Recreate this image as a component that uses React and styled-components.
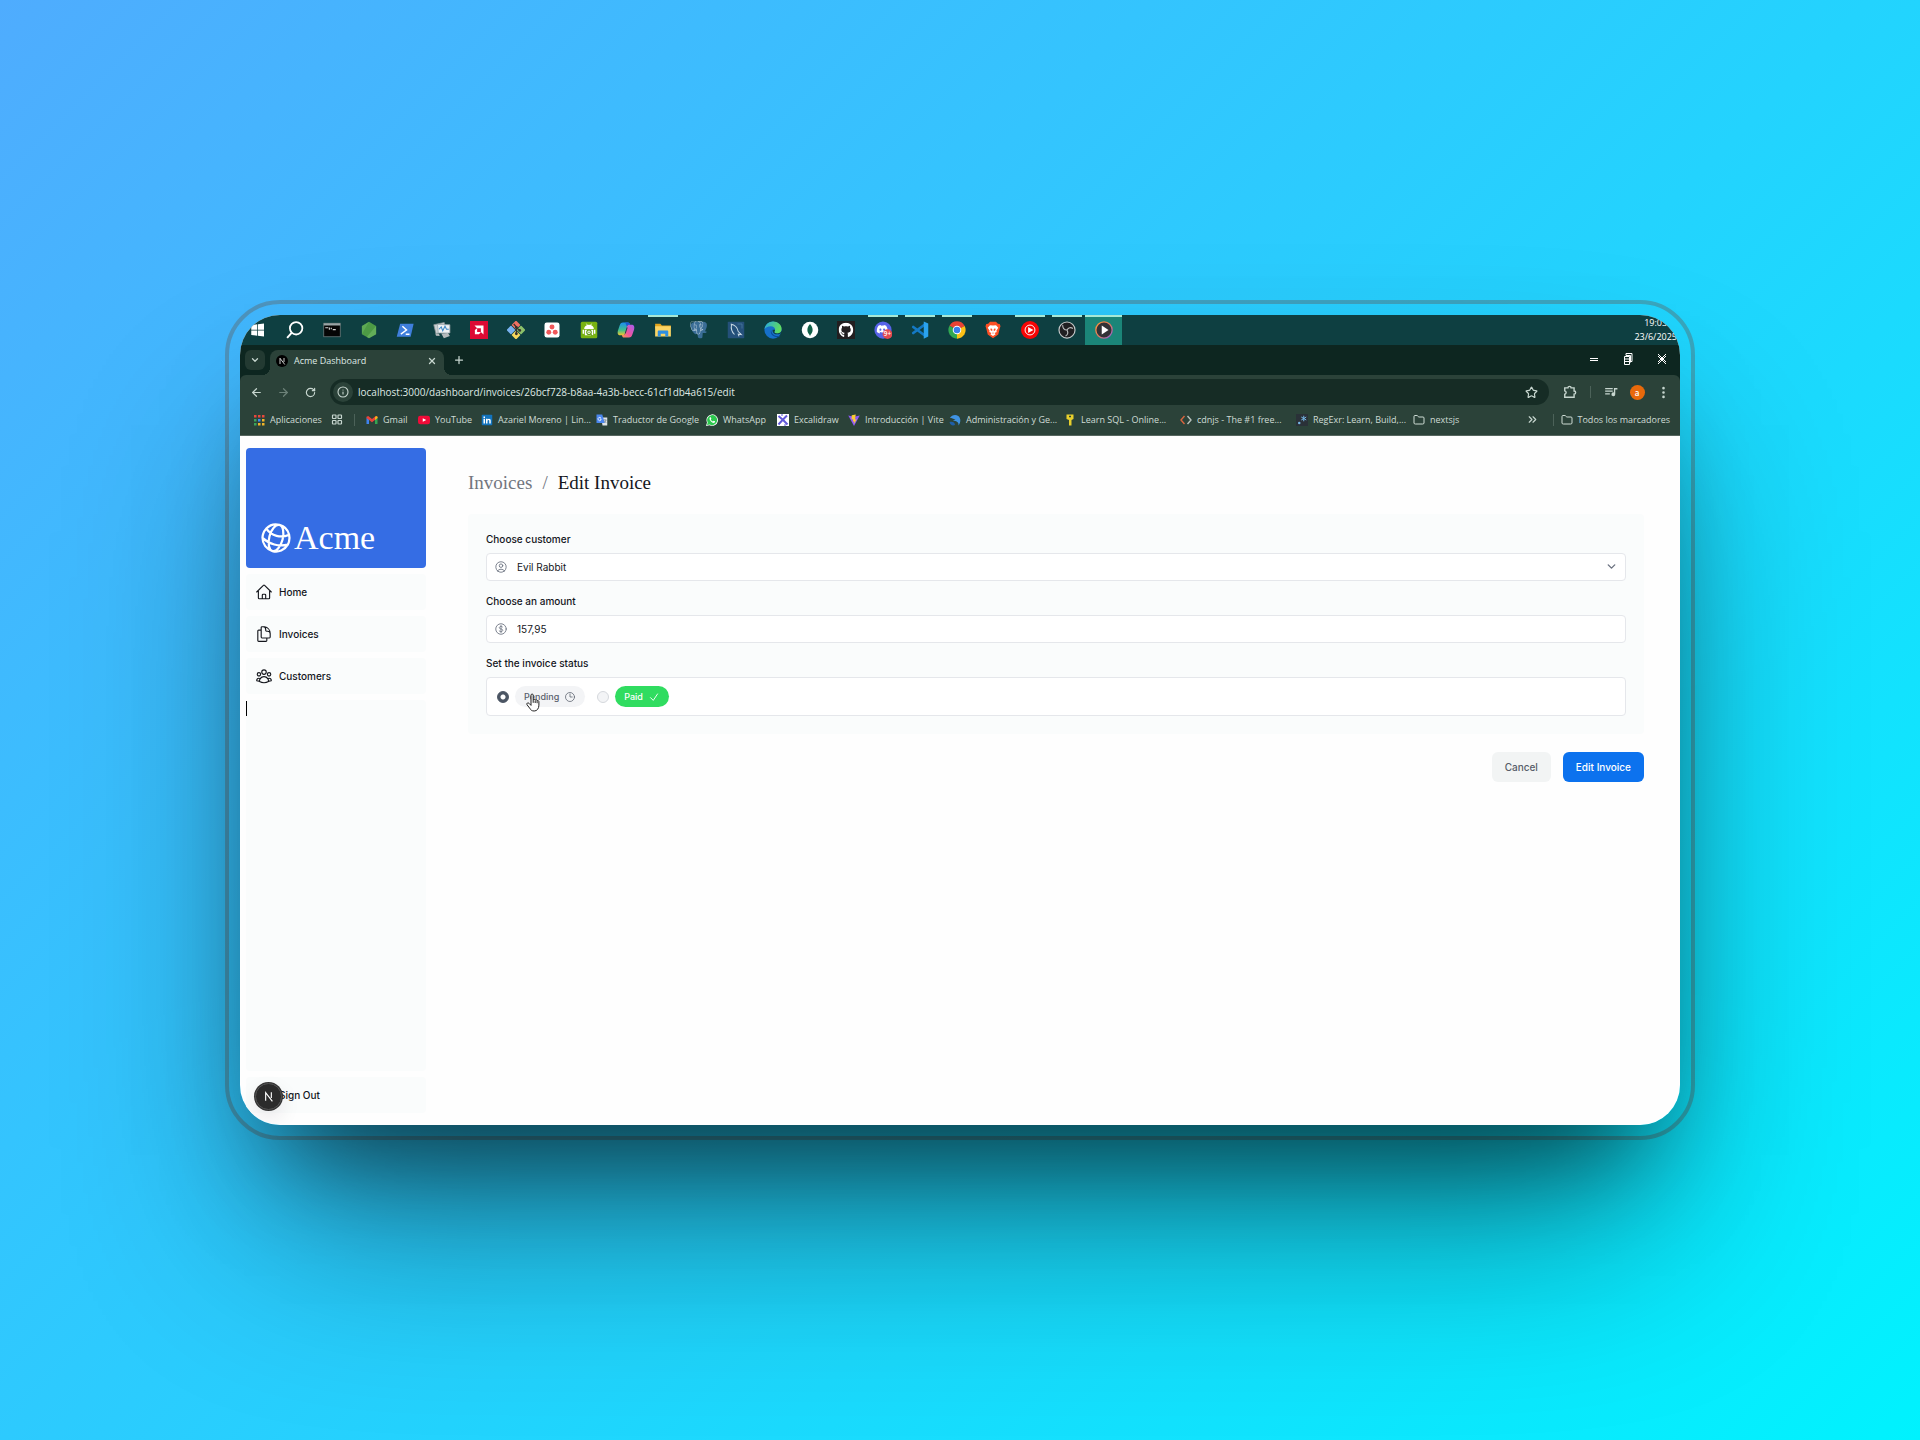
import React, { useState } from "react";
import styled, { createGlobalStyle, css } from "styled-components";
import {
  HiOutlineGlobeAlt,
  HiOutlineHome,
  HiOutlineDocumentDuplicate,
  HiOutlineUserGroup,
  HiOutlineUserCircle,
  HiOutlineCurrencyDollar,
  HiOutlineClock,
  HiOutlinePower,
} from "react-icons/hi2";
import { FaGithub, FaDiscord, FaWhatsapp } from "react-icons/fa";
import { SiPostgresql } from "react-icons/si";
import {
  ArrowLeft,
  ArrowRight,
  RotateCw,
  Info,
  Star,
  EllipsisVertical,
  ChevronDown,
  X,
  Plus,
  Folder,
  ChevronsRight,
  LayoutGrid,
} from "lucide-react";

const GlobalStyle = createGlobalStyle`
  *, *::before, *::after { box-sizing: border-box; }
  body { margin: 0; }
  button, input, select { font: inherit; color: inherit; margin: 0; }
  a { color: inherit; text-decoration: none; }
`;

const chromeFont = '"Open Sans", "Noto Sans", sans-serif';
const appFont = 'Inter, "Liberation Sans", sans-serif';
const serifFont = '"Liberation Serif", serif';

/* ---------- backdrop and window frame ---------- */

const Backdrop = styled.div`
  min-height: 100vh;
  display: flex;
  align-items: center;
  justify-content: center;
  overflow: hidden;
  background: linear-gradient(135deg, #4facfe 0%, #00f2fe 100%);
`;

const Bezel = styled.div`
  width: calc(75% + 30px);
  padding: 11px;
  border: 4px solid rgba(98, 98, 98, 0.4);
  border-radius: 55px;
`;

const Window = styled.div`
  position: relative;
  display: flex;
  flex-direction: column;
  aspect-ratio: 16 / 9;
  border-radius: 40px;
  overflow: hidden;
  background: #fefefe;
`;

const Shadow = styled.div`
  border-radius: 40px;
  box-shadow: 0 120px 200px -30px rgba(0, 0, 0, 0.45),
    0 70px 100px -40px rgba(0, 0, 0, 0.5);
`;

/* ---------- system task bar ---------- */

const TaskBar = styled.div`
  display: flex;
  justify-content: space-between;
  height: 30px;
  background: #0e3f41;
`;

const TaskList = styled.div`
  display: grid;
  grid-template-columns: repeat(24, 1fr);
  width: 882px;
`;

const TaskButton = styled.button`
  display: flex;
  align-items: center;
  justify-content: center;
  padding: 0;
  border: 0;
  background: ${(p) =>
    p.$active
      ? "linear-gradient(#a6e8d6 0 2px, #1b8578 2px)"
      : p.$open
        ? "linear-gradient(#a6e8d6, #a6e8d6) center top / 30px 2px no-repeat"
        : "none"};
  svg {
    display: block;
    width: 18px;
    height: 18px;
  }
`;

const Clock = styled.div`
  padding: 1px 3px 0 0;
  font: 9px/14px ${chromeFont};
  text-align: center;
  color: #fff;
`;

/* ---------- browser chrome ---------- */

const TabStrip = styled.div`
  display: flex;
  align-items: flex-end;
  height: 30px;
  padding-left: 5px;
  background: #0d2620;
  color: #dfe9e4;
`;

const IconButton = styled.button`
  display: flex;
  align-items: center;
  justify-content: center;
  width: ${(p) => p.$w || 26}px;
  height: 20px;
  padding: 0;
  border: 0;
  border-radius: 6px;
  background: ${(p) => p.$bg || "none"};
  color: ${(p) => p.$color || "#c7d6cf"};
`;

const SearchTabs = styled(IconButton)`
  margin-bottom: 5px;
  margin-right: 5px;
`;

const Tab = styled.div`
  position: relative;
  display: flex;
  align-items: center;
  gap: 6px;
  width: 174px;
  height: 25px;
  padding: 0 2px 4px 6px;
  border-radius: 8px 8px 0 0;
  background: #2b4239;
  font: 9px/14px ${chromeFont};
  &::before,
  &::after {
    content: "";
    position: absolute;
    bottom: 0;
    width: 8px;
    height: 8px;
  }
  &::before {
    left: -8px;
    background: radial-gradient(circle at 0 0, transparent 8px, #2b4239 8px);
  }
  &::after {
    right: -8px;
    background: radial-gradient(circle at 100% 0, transparent 8px, #2b4239 8px);
  }
`;

const TabTitle = styled.span`
  flex: 1;
`;

const NewTab = styled(IconButton)`
  margin: 0 auto 5px 5px;
`;

const WindowControls = styled.div`
  display: flex;
  align-self: stretch;
  align-items: center;
  padding: 0 1px 2px 0;
`;

const ControlButton = styled.button`
  display: flex;
  align-items: center;
  justify-content: center;
  width: 34px;
  height: 26px;
  padding: 0;
  border: 0;
  background: none;
  color: #fff;
`;

const ToolbarBack = styled.div`
  background: #0d2620;
`;

const Toolbar = styled.div`
  display: flex;
  align-items: center;
  height: 34px;
  padding: 0 4px 0 3px;
  border-radius: 6px 6px 0 0;
  background: #2b4239;
`;

const AddressBar = styled.form`
  display: flex;
  flex: 1;
  align-items: center;
  gap: 5px;
  height: 26px;
  margin: 0 8px 0 6px;
  padding: 0 5px 0 3px;
  border-radius: 13px;
  background: #162c25;
`;

const SiteInfo = styled(IconButton)`
  border-radius: 50%;
`;

const AddressInput = styled.input`
  flex: 1;
  min-width: 0;
  padding: 0;
  border: 0;
  outline: 0;
  background: none;
  color: #dfe9e4;
  font: 10px/16px ${chromeFont};
`;

const Divider = styled.span`
  width: 1px;
  height: 12px;
  margin: 0 ${(p) => p.$gap || 7}px;
  background: #4c6259;
`;

const Avatar = styled.span`
  width: 15px;
  height: 15px;
  border-radius: 50%;
  background: #e8690b;
  color: #fff;
  font: 600 8px/15px ${chromeFont};
  text-align: center;
`;

const Bookmarks = styled.nav`
  display: flex;
  align-items: center;
  height: 27px;
  padding: 0 10px 5px 13px;
  border-bottom: 1px solid #56665f;
  background: #2b4239;
  color: #cfdcd5;
  font: 9px/14px ${chromeFont};
`;

const Bookmark = styled.a`
  display: flex;
  align-items: center;
  gap: 5px;
  width: ${(p) => (p.$w ? p.$w + "px" : "auto")};
  white-space: nowrap;
  svg {
    display: block;
    flex: none;
    width: 12px;
    height: 12px;
  }
`;

const BookmarkEnd = styled.div`
  display: flex;
  align-items: center;
  margin-left: auto;
`;

/* ---------- dashboard page ---------- */

const Page = styled.div`
  display: flex;
  flex: 1;
  min-height: 0;
  font-family: ${appFont};
  color: #14161c;
`;

const Sidebar = styled.aside`
  display: flex;
  flex-direction: column;
  gap: 6px;
  width: 192px;
  padding: 12px 6px;
`;

const LogoCard = styled.a`
  display: flex;
  align-items: flex-end;
  height: 120px;
  padding: 12px;
  border-radius: 4px;
  background: #356de4;
  color: #fff;
  font: 34px/36px ${serifFont};
  svg {
    width: 36px;
    height: 36px;
    transform: rotate(15deg);
  }
`;

const rowStyle = css`
  display: flex;
  align-items: center;
  gap: 6px;
  width: 100%;
  height: 36px;
  padding: 0 9px;
  border: 0;
  border-radius: 4px;
  background: #fafcfc;
  font: 500 10px/16px ${appFont};
  svg {
    width: 18px;
    height: 18px;
  }
`;

const NavLink = styled.a`
  ${rowStyle}
`;

const SignOutButton = styled.button`
  ${rowStyle}
`;

const Filler = styled.div`
  position: relative;
  flex: 1;
  border-radius: 4px;
  background: #fafcfc;
`;

const Caret = styled.span`
  position: absolute;
  top: 1px;
  left: 0;
  width: 1px;
  height: 15px;
  background: #000;
`;

const Main = styled.main`
  flex: 1;
  padding: 36px;
`;

const Crumbs = styled.nav`
  display: flex;
  gap: 10px;
  margin-bottom: 20px;
  font: 19px/22px ${serifFont};
  color: #72767f;
`;

const CrumbCurrent = styled.a`
  color: #14161c;
`;

const Panel = styled.div`
  display: flex;
  flex-direction: column;
  gap: 13px;
  padding: 18px;
  border-radius: 4px;
  background: #fafcfc;
`;

const Field = styled.div`
  display: flex;
  flex-direction: column;
  gap: 6px;
`;

const labelStyle = css`
  padding: 0;
  font: 500 10px/15px ${appFont};
`;

const Label = styled.label`
  ${labelStyle}
`;

const StatusGroup = styled.fieldset`
  margin: 0;
  padding: 0;
  border: 0;
  min-width: 0;
`;

const Legend = styled.legend`
  ${labelStyle}
  margin-bottom: 6px;
`;

const ControlWrap = styled.div`
  position: relative;
  display: flex;
`;

const FieldIcon = styled.span`
  position: absolute;
  top: 7px;
  ${(p) => (p.$right ? "right: 8px;" : "left: 8px;")}
  display: flex;
  color: #6b7280;
  pointer-events: none;
`;

const controlStyle = css`
  flex: 1;
  height: 28px;
  padding: 0 30px;
  border: 1px solid #e5e7eb;
  border-radius: 4px;
  outline: 0;
  background: #fff;
  appearance: none;
  font: 10px/16px ${appFont};
`;

const Select = styled.select`
  ${controlStyle}
`;

const TextInput = styled.input`
  ${controlStyle}
`;

const StatusBox = styled.div`
  display: flex;
  gap: 12px;
  padding: 8px 10px;
  border: 1px solid #e5e7eb;
  border-radius: 4px;
  background: #fff;
`;

const StatusOption = styled.div`
  position: relative;
  display: flex;
  align-items: center;
  gap: 6px;
`;

const Radio = styled.input`
  appearance: none;
  width: 12px;
  height: 12px;
  border: 1px solid #d5d8dd;
  border-radius: 50%;
  background: #f3f4f6;
  &:checked {
    border-color: #4b5563;
    background: radial-gradient(circle, #fff 2px, #4b5563 3px);
  }
`;

const Chip = styled.label`
  display: flex;
  align-items: center;
  gap: 5px;
  height: 21px;
  padding: 0 9px;
  border-radius: 11px;
  background: ${(p) => (p.$paid ? "#30dc60" : "#f3f4f6")};
  color: ${(p) => (p.$paid ? "#fff" : "#5a606c")};
  font: 500 9px/12px ${appFont};
`;

const Pointer = styled.svg`
  position: absolute;
  left: 29px;
  top: 7px;
  width: 14px;
  height: 19px;
`;

const Actions = styled.div`
  display: flex;
  justify-content: flex-end;
  gap: 12px;
  margin-top: 18px;
`;

const buttonStyle = css`
  height: 30px;
  padding: 0 13px;
  border: 0;
  border-radius: 6px;
  font: 500 10px/30px ${appFont};
`;

const CancelLink = styled.a`
  ${buttonStyle}
  background: #f2f4f4;
  color: #565c68;
`;

const SubmitButton = styled.button`
  ${buttonStyle}
  background: #0c72ee;
  color: #fff;
`;

const DevBadge = styled.button`
  position: absolute;
  left: 15px;
  bottom: 15px;
  width: 27px;
  height: 27px;
  padding: 0;
  border: 1px solid #555;
  border-radius: 50%;
  background: #2b2b2b;
  box-shadow: 0 0 0 1px #333, 0 8px 20px rgba(40, 0, 40, 0.1);
  svg {
    display: block;
    margin: auto;
  }
`;

/* ---------- task bar icons ---------- */

const I = ({ children }) => <svg viewBox="0 0 24 24">{children}</svg>;

const Windows = () => (
  <I>
    <path fill="#fff" d="M3 5.300 11 4.300v7.200H3zM12 4.200 20 3.200v8.300h-8zM3 12.500h8v7.200l-8-1zM12 12.500h8v8.300l-8-1.100z" />
  </I>
);
const Search = () => (
  <I>
    <circle cx="13.500" cy="9.700" r="8.300" fill="none" stroke="#fff" strokeWidth="2.400" />
    <path d="M7.500 15.700 1.500 22.500" stroke="#fff" strokeWidth="2.600" />
  </I>
);
const Terminal = () => (
  <I>
    <rect x="1" y="3" width="22" height="18" fill="#050505" stroke="#6d7d7f" />
    <rect x="1" y="3" width="22" height="3" fill="#9aa5a6" />
    <path d="M3 9h4M8.500 8.500v3M11 9v2M13 11.500h4" stroke="#d5d5d5" strokeWidth="1.500" fill="none" />
  </I>
);
const Node = () => (
  <I>
    <path fill="#4d9a45" d="M12 1 21.500 6.500v11L12 23l-9.500-5.500v-11z" />
    <path fill="#7fc66f" d="M12 1 2.500 6.500v11z" opacity=".35" />
    <path fill="#7fc66f" d="M21.500 6.500 9 21.300l3 1.700 9.500-5.500z" opacity=".45" />
  </I>
);
const PowerShell = () => (
  <I>
    <path fill="#3f7fdc" d="M5.500 3.500h18L19.500 21H1z" />
    <path d="m8.500 7 5.500 5-7.500 5.500M13 17.500h5" fill="none" stroke="#fff" strokeWidth="2" />
  </I>
);
const Monitor = () => (
  <I>
    <path fill="#c9cfd1" d="M1 5 15 2l2 11-13 4z" stroke="#8d9698" />
    <path fill="#eef2f5" d="M6 4.500 22.500 5v11L7 16z" stroke="#98a4a8" />
    <path d="m8 11 3-3 2 5 3-6 2 4h3" stroke="#3c87c4" fill="none" strokeWidth="1.400" />
    <path fill="#b4babc" d="m11 16.500 9-.5 2.500 4-8 3zM3 16.500l5 .5 1 3-5-.5z" />
  </I>
);
const Amd = () => (
  <I>
    <rect width="24" height="24" fill="#dc0a34" />
    <path fill="#fff" d="M6 6h12v12l-3.500-3.500v-5h-5zM6.500 12 9.500 9.500v5h5L12 17.500H6.500z" />
  </I>
);
const Git = () => (
  <I>
    <g transform="rotate(45 12 12)">
      <rect x="3" y="3" width="8.500" height="8.500" rx="1" fill="#ee7062" />
      <rect x="12.500" y="3" width="8.500" height="8.500" rx="1" fill="#8bc06a" />
      <rect x="3" y="12.500" width="8.500" height="8.500" rx="1" fill="#78b2f0" />
      <rect x="12.500" y="12.500" width="8.500" height="8.500" rx="1" fill="#f5d65c" />
    </g>
    <path d="m9 4 3.500 4v9M12.500 9l4.500 3.500" stroke="#35312f" strokeWidth="1.600" fill="none" />
    <g fill="#35312f">
      <circle cx="12.500" cy="8.500" r="1.900" />
      <circle cx="12.500" cy="17" r="1.900" />
      <circle cx="17" cy="12.500" r="1.900" />
    </g>
  </I>
);
const Asana = () => (
  <I>
    <rect x="2" y="2" width="20" height="20" rx="3" fill="#fff" />
    <g fill="#f0585a">
      <circle cx="12" cy="8" r="3.300" />
      <circle cx="7.700" cy="15" r="3.300" />
      <circle cx="16.300" cy="15" r="3.300" />
    </g>
  </I>
);
const Android = () => (
  <I>
    <rect x="1" y="1" width="22" height="22" rx="2" fill="#78b312" />
    <path fill="#fff" d="M5.500 10.500a6.500 5.500 0 0 1 13 0zM6.500 11.500h11V19h-11zM3.500 11.500h2V17h-2zM18.500 11.500h2V17h-2z" />
    <path d="m8.500 3.500 1.300 2M15.500 3.500l-1.300 2" stroke="#fff" />
    <circle cx="12" cy="15" r="3" fill="#fff" stroke="#5f9a10" strokeWidth="1.500" />
    <circle cx="12" cy="15" r="1" fill="#5f9a10" />
    <path d="m14 17 2.500 3" stroke="#5f9a10" strokeWidth="1.500" />
  </I>
);
const Copilot = () => (
  <I>
    <defs>
      <linearGradient id="cpA" x1="0" y1="0" x2="0" y2="1">
        <stop offset="0" stopColor="#1d8df0" />
        <stop offset=".6" stopColor="#3fc08c" />
        <stop offset="1" stopColor="#f3c62e" />
      </linearGradient>
      <linearGradient id="cpB" x1="1" y1="0" x2="0" y2="1">
        <stop offset="0" stopColor="#a45cf0" />
        <stop offset=".6" stopColor="#f0569b" />
        <stop offset="1" stopColor="#fb9a4c" />
      </linearGradient>
    </defs>
    <path fill="url(#cpA)" d="M8 2h6.500c2 0 2.500 1.500 3 3.500h-3.500L10.500 17c-.5 1.500-1.500 2-3 2H4.500C1 19 .3 16 1.300 12.500L3.500 6C4.300 3.500 5.500 2 8 2z" />
    <path fill="url(#cpB)" d="M16 22H9.500c-2 0-2.500-1.500-3-3.500C9 19 10 18.500 10.700 16.500L13.500 7c.5-1.500 1.500-2 3-2h3c3.500 0 4.200 3 3.200 6.500L20.500 18c-.8 2.500-2 4-4.500 4z" />
    <path fill="#0e3f41" d="m13 8.500-2.600 8h1.200L14.200 8.500z" />
    <path fill="#1c5ad0" d="M11 2h4c1.500 0 2.300 1.500 2.600 3h-1.500c-1.500 0-2.500.8-3 2.300z" />
  </I>
);
const Explorer = () => (
  <I>
    <path fill="#e2a51d" d="M1.500 3.500h7l2 2.500h12v4h-21z" />
    <path fill="#fbd564" d="M1.500 7h21v13.500h-21z" />
    <path fill="#2f8fe0" d="M5 20.500V14c0-1 .5-1.500 1.500-1.500h11c1 0 1.500.5 1.500 1.500v6.500h-4V17H9v3.500z" />
  </I>
);
const Postgres = () => (
  <I>
    <path fill="#3a6d96" d="M5 1.500c3-1.300 6-.5 7.500.3C15 .5 20 .3 22 3c1.500 3 0 7-2 10.500l2.500.7c-1 2-3.500 2-5.500 1.800l-.5 6c-1.500 1.800-5.500 1.500-6-1l-.5-4-3 .5C3 15 .5 9 1 5c.3-2 2-3 4-3.500z" />
    <SiPostgresql size={24} color="#c9d9e4" />
  </I>
);
const Mysql = () => (
  <I>
    <rect x="1" y="1" width="22" height="22" rx="1" fill="#24507a" />
    <path d="M5 4c5 1 9 5 10 10l4 4-4-.5 1 3M6 5c-1 5 1 10 4 13" fill="none" stroke="#c3d5e1" strokeWidth="1.400" />
    <path d="M14 4h6M20 4v6" stroke="#4b7ba0" />
  </I>
);
const Edge = () => (
  <I>
    <defs>
      <linearGradient id="edA" x1="0" y1="0" x2="1" y2=".3">
        <stop offset="0" stopColor="#27a7dd" />
        <stop offset="1" stopColor="#5fdb60" />
      </linearGradient>
    </defs>
    <circle cx="12" cy="12" r="11.500" fill="#1670c9" />
    <path fill="url(#edA)" d="M.6 11C1.500 4.500 6.500.5 12 .5c6.500 0 11.500 4.500 11.500 10 0 4-3 6-6 6-2.500 0-3.700-1-3.700-2 0-.8 1-1.200 1-3.200C14.800 9 12.500 7 9 7 5 7 1.500 9 .6 11z" />
    <path fill="#0c4a94" d="M9.500 11.500c-2 5 2.500 10 8.500 10 1.500 0 3-.8 4-2-6 2-12-1-12.500-8z" />
    <path fill="#0e3f41" d="M11.500 11.500c-.5 4 2.500 6.300 6.500 6.300 2.300 0 4.500-.8 6-2V13c-1.500 2.500-4 3.500-6.500 3.500s-3.700-1-3.700-2c0-.8 1-1.200 1-3z" />
  </I>
);
const Mongo = () => (
  <I>
    <circle cx="12" cy="12" r="11" fill="#fff" />
    <path fill="#116149" d="M12 4c2.500 3 3.500 5 3.500 8s-1.500 5-3 6.500L12 20.500l-.5-2C10 17 8.500 15 8.500 12S9.500 7 12 4z" />
  </I>
);
const GithubTile = () => (
  <I>
    <rect width="24" height="24" fill="#221f20" />
    <g transform="translate(2 2)">
      <FaGithub size={20} color="#fff" style={{ width: 20, height: 20 }} />
    </g>
  </I>
);
const Discord = () => (
  <I>
    <circle cx="12" cy="12" r="11.500" fill="#5763e8" />
    <g transform="translate(3 3)">
      <FaDiscord color="#fff" style={{ width: 16, height: 16 }} />
    </g>
    <circle cx="18" cy="17.500" r="6.500" fill="#e34a50" />
    <text x="18" y="20.500" fontSize="8.500" fontWeight="600" textAnchor="middle" fill="#fff" fontFamily="Open Sans">9+</text>
  </I>
);
const VsCode = () => (
  <I>
    <path d="M18 5 3 16M18 19 3 8" stroke="#1479c4" strokeWidth="3.600" fill="none" strokeLinecap="round" />
    <path fill="#2aa3ee" d="m17 .5 6 2.800v17.400l-6 2.800z" />
  </I>
);
const Chrome = () => (
  <I>
    <path fill="#e84335" d="M12 12 2 6.300A11.500 11.500 0 0 1 22 6.300z" />
    <path fill="#fbc116" d="M12 12 22 6.300A11.500 11.500 0 0 1 12 23.500z" />
    <path fill="#31a852" d="M12 12v11.500A11.500 11.500 0 0 1 2 6.300z" />
    <path fill="#e84335" d="M12 6.500h10L12 12z" />
    <path fill="#fbc116" d="m16.800 14.800-4.800 8.700V12z" />
    <circle cx="12" cy="12" r="5.700" fill="#fff" />
    <circle cx="12" cy="12" r="4.400" fill="#3a7fee" />
  </I>
);
const Brave = () => (
  <I>
    <path fill="#fb4f24" d="M8 1h8l2.500 2.500L21 4l1 3-1 3-2 8-7 5-7-5-2-8-1-3 1-3 2.500-.5z" />
    <path fill="#fff" d="M8 5.500 12 6l4-.5 3 3.500-2.500 4 .5 1.500-3 1.500 1.500 1.500L12 20l-3.500-2.500L10 16l-3-1.500.5-1.500L5 9z" />
    <path fill="#fb4f24" d="m9 9.500 2 1v3L8.500 12zM15 9.500l-2 1v3l2.500-1.500zM10.500 15.500h3L12 17z" />
  </I>
);
const YtMusic = () => (
  <I>
    <circle cx="12" cy="12" r="12" fill="#f80505" />
    <circle cx="12" cy="12" r="6.600" fill="none" stroke="#fff" strokeWidth="1.300" />
    <path fill="#fff" d="m9.500 8 7 4-7 4z" />
  </I>
);
const Obs = () => (
  <I>
    <circle cx="12" cy="12" r="10.700" fill="#201f21" stroke="#c3c7c8" strokeWidth="1.600" />
    <g fill="none" stroke="#b9bcbd" strokeWidth="1.500">
      <path d="M12 12C8 12 6 9 6.300 5.500" />
      <path d="M12 12c2-3.500 5-4 8-2" />
      <path d="M12 12c2 3.500 1 6.500-2 8" />
    </g>
  </I>
);
const MediaPlayer = () => (
  <I>
    <defs>
      <linearGradient id="mp" x1="0" y1="0" x2="1" y2="1">
        <stop offset="0" stopColor="#ff9638" />
        <stop offset=".5" stopColor="#e0795f" />
        <stop offset="1" stopColor="#8a5fd8" />
      </linearGradient>
    </defs>
    <circle cx="12" cy="12" r="10.900" fill="#333236" stroke="url(#mp)" strokeWidth="1.800" />
    <path fill="#fff" d="m9 6 9 6-9 6z" />
  </I>
);

const tasks = [
  { name: "Inicio", icon: Windows },
  { name: "Buscar", icon: Search },
  { name: "Terminal", icon: Terminal },
  { name: "Node.js", icon: Node },
  { name: "PowerShell", icon: PowerShell },
  { name: "Monitor", icon: Monitor },
  { name: "AMD", icon: Amd },
  { name: "Git", icon: Git },
  { name: "Asana", icon: Asana },
  { name: "Android", icon: Android },
  { name: "Copilot", icon: Copilot },
  { name: "Explorador", icon: Explorer, open: true },
  { name: "PostgreSQL", icon: Postgres },
  { name: "MySQL", icon: Mysql },
  { name: "Edge", icon: Edge },
  { name: "MongoDB", icon: Mongo },
  { name: "GitHub", icon: GithubTile },
  { name: "Discord", icon: Discord, open: true },
  { name: "VS Code", icon: VsCode, open: true },
  { name: "Chrome", icon: Chrome, open: true },
  { name: "Brave", icon: Brave },
  { name: "YouTube Music", icon: YtMusic, open: true },
  { name: "OBS", icon: Obs, open: true },
  { name: "Reproductor", icon: MediaPlayer, active: true },
];

/* ---------- bookmark icons ---------- */

const AppsIcon = () => (
  <I>
    {["#e8473c", "#e8473c", "#e8473c", "#3ba55a", "#3d86f0", "#f0b429", "#3ba55a", "#f0b429", "#f0b429"].map((c, i) => (
      <rect key={i} x={2 + (i % 3) * 8} y={2 + Math.floor(i / 3) * 8} width="5" height="5" fill={c} />
    ))}
  </I>
);
const Gmail = () => (
  <I>
    <path fill="#3f83ef" d="M1 7v13h5v-9z" />
    <path fill="#33a652" d="M23 7v13h-5v-9z" />
    <path fill="#e8433a" d="M1 5.500 4.500 4 12 10l7.500-6L23 5.500V8l-11 8.500L1 8z" />
    <path fill="#f9bb14" d="m18 7 2-3 3 1.500V8l-5 4z" />
  </I>
);
const YouTube = () => (
  <I>
    <rect x="0" y="3.500" width="24" height="17" rx="4.500" fill="#f00b38" />
    <path fill="#fff" d="m9.500 8.500 7 3.500-7 3.500z" />
  </I>
);
const LinkedIn = () => (
  <I>
    <rect x="1.500" y="1.500" width="21" height="21" rx="1.500" fill="#1273bd" />
    <path fill="#fff" d="M5 9.500h3V19H5zM5 5h3v3H5zM10 9.500h3v1.300c.8-1 1.800-1.500 3-1.500 2.500 0 3.500 1.700 3.500 4.200V19h-3v-5c0-1.300-.5-2-1.600-2-1.200 0-1.900.8-1.900 2.200V19h-3z" />
  </I>
);
const Translate = () => (
  <I>
    <path fill="#dfe4e8" d="M10 7h12.500v16H13z" />
    <path fill="#4a86ee" d="M1 1h11.500l5 17H1z" />
    <path d="M10.300 8.500A3.300 3.300 0 1 0 10 12V10H7.500" stroke="#fff" strokeWidth="1.500" fill="none" />
    <path d="M15 12h6M18 10.500V12M20 12c-.5 2.500-2 4-3.500 5M17 14l3.500 4" stroke="#62717c" strokeWidth="1.200" fill="none" />
  </I>
);
const WhatsApp = () => (
  <I>
    <path fill="#fff" d="M0 24 2 17A11.500 11.500 0 1 1 7 22.300z" />
    <path fill="#2cc84e" d="m2 22 1.500-5A10 10 0 1 1 7.500 21z" />
    <path fill="#fff" d="M8.500 6.500c-2 1-2 3.500 0 6.500 2.500 3.500 5.500 5.500 8 4.500 1.500-.5 1.800-2 1.500-2.800l-2.700-1.400-1.500 1.500c-2-.7-3.400-2-4.300-4l1.200-1.500-1-2.600z" />
  </I>
);
const Excalidraw = () => (
  <I>
    <rect x="0" y="0" width="24" height="24" fill="#fff" />
    <path d="M3 4c6 5 12 10 18 17M20 3C14 9 8 15 3 21" stroke="#6158d8" strokeWidth="4" fill="none" />
    <path d="M8 2h4M14 22h4" stroke="#6158d8" strokeWidth="2" />
  </I>
);
const Vite = () => (
  <I>
    <path fill="#8d58f4" d="M.5 3 12 24 23.500 3 12 5.500z" />
    <path fill="#fbcb32" d="m15.500 1-8 1.500L7 11l3.500-.5-1 5 3-1-1 6 6-10-3.500.5z" />
  </I>
);
const Admin = () => (
  <I>
    <path fill="#3f93e4" d="M2 8C5 2 13 0 18.500 4 24 8 24 17 19 23c1-7-4-10-11-9 2-2 4-2 5-2-4-3-8-4-11-4z" />
    <path fill="#1e5ea8" d="M1 16c5-2 11 0 11 6-5 2-10 0-11-6z" />
  </I>
);
const KeyIcon = () => (
  <I>
    <path fill="#e8cf2c" d="M5 1h14v9l-4 2v11h-5V12l-5-2z" />
    <path fill="#2b4239" d="M10 3.500h4v3h-4z" />
  </I>
);
const Cdnjs = () => (
  <I>
    <path d="m9 4-7 8 7 8" fill="none" stroke="#d9653f" strokeWidth="2.800" />
    <path d="m15 4 7 8-7 8" fill="none" stroke="#b8c2bd" strokeWidth="2.800" />
  </I>
);
const RegExr = () => (
  <I>
    <rect width="24" height="24" fill="#2a3138" />
    <circle cx="6.500" cy="18" r="2.500" fill="#76b7e6" />
    <path d="M15.500 3.500v11M10.500 6l10 6M20.500 6l-10 6" stroke="#76b7e6" strokeWidth="2" />
  </I>
);

const bookmarks = [
  { label: "Gmail", icon: Gmail, w: 52 },
  { label: "YouTube", icon: YouTube, w: 63 },
  { label: "Azariel Moreno | Lin...", icon: LinkedIn, w: 115 },
  { label: "Traductor de Google", icon: Translate, w: 110 },
  { label: "WhatsApp", icon: WhatsApp, w: 71 },
  { label: "Excalidraw", icon: Excalidraw, w: 71 },
  { label: "Introducción | Vite", icon: Vite, w: 101 },
  { label: "Administración y Ge...", icon: Admin, w: 115 },
  { label: "Learn SQL - Online...", icon: KeyIcon, w: 116 },
  { label: "cdnjs - The #1 free...", icon: Cdnjs, w: 116 },
  { label: "RegExr: Learn, Build,...", icon: RegExr, w: 117 },
  { label: "nextsjs", icon: Folder },
];

const navLinks = [
  { label: "Home", icon: HiOutlineHome },
  { label: "Invoices", icon: HiOutlineDocumentDuplicate },
  { label: "Customers", icon: HiOutlineUserGroup },
];

const NextMark = ({ size, disc }) => (
  <svg width={size} height={size} viewBox="0 0 24 24">
    {disc && <circle cx="12" cy="12" r="12" fill="#000" />}
    <path d="M8 18V6.500L17.500 19M16 6v8" fill="none" stroke="#fff" strokeWidth="1.600" />
  </svg>
);

const SystemBar = () => (
  <TaskBar>
    <TaskList>
      {tasks.map(({ name, icon: Icon, open, active }) => (
        <TaskButton key={name} type="button" aria-label={name} $open={open} $active={active}>
          <Icon />
        </TaskButton>
      ))}
    </TaskList>
    <Clock>
      <div>19:03</div>
      <div>23/6/2025</div>
    </Clock>
  </TaskBar>
);

const BrowserChrome = () => (
  <>
    <TabStrip>
      <SearchTabs type="button" $w={20} $bg="#233a32" aria-label="Buscar pestañas">
        <ChevronDown size={10} strokeWidth={3} />
      </SearchTabs>
      <Tab>
        <NextMark size={12} disc />
        <TabTitle>Acme Dashboard</TabTitle>
        <IconButton type="button" $w={20} aria-label="Cerrar pestaña">
          <X size={10} strokeWidth={3} />
        </IconButton>
      </Tab>
      <NewTab type="button" $w={20} aria-label="Nueva pestaña">
        <Plus size={12} strokeWidth={2.5} />
      </NewTab>
      <WindowControls>
        <ControlButton type="button" aria-label="Minimizar">
          <svg width="10" height="10" viewBox="0 0 10 10">
            <path d="M1 4.500h8M1 6.500h8" stroke="currentColor" />
          </svg>
        </ControlButton>
        <ControlButton type="button" aria-label="Restaurar">
          <svg width="10" height="12" viewBox="0 0 10 12" fill="none" stroke="currentColor">
            <path d="M3 2.500V.5h6v8H7.500M1.500 3.500h5v8h-5zM3 2.500h4.500v7M2 6h4M2 8.500h4" />
          </svg>
        </ControlButton>
        <ControlButton type="button" aria-label="Cerrar">
          <svg width="10" height="12" viewBox="0 0 10 12" fill="none" stroke="currentColor">
            <path d="m1 1 8 8M9 1 1 9M1 3l8 8M9 3l-8 8" />
          </svg>
        </ControlButton>
      </WindowControls>
    </TabStrip>
    <ToolbarBack>
      <Toolbar>
        <IconButton type="button" $w={27} aria-label="Atrás">
          <ArrowLeft size={13} strokeWidth={2.2} />
        </IconButton>
        <IconButton type="button" $w={27} $color="#6d8279" aria-label="Adelante">
          <ArrowRight size={13} strokeWidth={2.2} />
        </IconButton>
        <IconButton type="button" $w={27} aria-label="Recargar">
          <RotateCw size={11} strokeWidth={2.6} />
        </IconButton>
        <AddressBar onSubmit={(e) => e.preventDefault()}>
          <SiteInfo type="button" $w={20} $bg="#2b4239" aria-label="Información del sitio">
            <Info size={12} strokeWidth={2.2} />
          </SiteInfo>
          <AddressInput
            aria-label="Dirección"
            defaultValue="localhost:3000/dashboard/invoices/26bcf728-b8aa-4a3b-becc-61cf1db4a615/edit"
          />
          <IconButton type="button" aria-label="Añadir a marcadores">
            <Star size={13} strokeWidth={2.2} />
          </IconButton>
        </AddressBar>
        <IconButton type="button" aria-label="Extensiones">
          <svg width="14" height="14" viewBox="0 0 24 24" fill="none" stroke="currentColor" strokeWidth="2.400">
            <path d="M3 5h5.500a2.700 2.700 0 0 1 5.400 0H19v5.200a2.700 2.700 0 0 1 0 5.400V21H3v-5.200a2.900 2.900 0 0 0 0-5.700z" />
          </svg>
        </IconButton>
        <Divider />
        <IconButton type="button" aria-label="Multimedia">
          <svg width="14" height="14" viewBox="0 0 24 24" fill="currentColor">
            <path d="M2 5h13v2.200H2zM2 9.500h13v2.200H2zM2 14h8v2.200H2zM17 5h6v2.500h-3.700V16a3.300 3.300 0 1 1-2.300-3.200z" />
          </svg>
        </IconButton>
        <IconButton type="button" aria-label="Perfil">
          <Avatar>a</Avatar>
        </IconButton>
        <IconButton type="button" aria-label="Menú">
          <EllipsisVertical size={15} strokeWidth={2.2} />
        </IconButton>
      </Toolbar>
    </ToolbarBack>
    <Bookmarks aria-label="Marcadores">
      <Bookmark href="#" $w={78}>
        <AppsIcon />
        Aplicaciones
      </Bookmark>
      <IconButton type="button" $w={12} aria-label="Grupos de pestañas">
        <LayoutGrid size={13} strokeWidth={2.4} />
      </IconButton>
      <Divider $gap={11} />
      {bookmarks.map(({ label, icon: Icon, w }) => (
        <Bookmark key={label} href="#" $w={w}>
          <Icon />
          {label}
        </Bookmark>
      ))}
      <BookmarkEnd>
        <IconButton type="button" aria-label="Más marcadores">
          <ChevronsRight size={13} strokeWidth={2.2} />
        </IconButton>
        <Divider />
        <Bookmark href="#">
          <Folder />
          Todos los marcadores
        </Bookmark>
      </BookmarkEnd>
    </Bookmarks>
  </>
);

const InvoiceForm = () => {
  const [status, setStatus] = useState("pending");
  return (
    <form onSubmit={(e) => e.preventDefault()}>
      <Panel>
        <Field>
          <Label htmlFor="customer">Choose customer</Label>
          <ControlWrap>
            <Select id="customer" defaultValue="Evil Rabbit">
              <option>Evil Rabbit</option>
            </Select>
            <FieldIcon>
              <HiOutlineUserCircle size={14} />
            </FieldIcon>
            <FieldIcon $right>
              <ChevronDown size={13} strokeWidth={2.6} />
            </FieldIcon>
          </ControlWrap>
        </Field>
        <Field>
          <Label htmlFor="amount">Choose an amount</Label>
          <ControlWrap>
            <TextInput id="amount" defaultValue="157,95" />
            <FieldIcon>
              <HiOutlineCurrencyDollar size={14} />
            </FieldIcon>
          </ControlWrap>
        </Field>
        <StatusGroup>
          <Legend>Set the invoice status</Legend>
          <StatusBox>
            <StatusOption>
              <Radio
                type="radio"
                name="status"
                id="pending"
                checked={status === "pending"}
                onChange={() => setStatus("pending")}
              />
              <Chip htmlFor="pending">
                Pending
                <HiOutlineClock size={12} />
              </Chip>
              <Pointer viewBox="0 0 14 19">
                <path
                  d="M5 2.200c0-1.600 2.200-1.600 2.200 0v4.600c.5-.8 1.800-.6 2 .3.600-.6 1.700-.3 1.900.5.800-.4 1.800.1 1.800 1.200v3.400c0 3.300-1.800 5.800-4.700 5.800-2.400 0-3.500-1-4.500-2.800L1 11.700c-.8-1.400 1-2.500 2.100-1.300L5 12.400z"
                  fill="#fff"
                  stroke="#222"
                />
                <path d="M7.200 6.800v3M9.200 7.500v2.500M11.100 8v2.200" stroke="#222" />
              </Pointer>
            </StatusOption>
            <StatusOption>
              <Radio
                type="radio"
                name="status"
                id="paid"
                checked={status === "paid"}
                onChange={() => setStatus("paid")}
              />
              <Chip htmlFor="paid" $paid>
                Paid
                <svg width="12" height="12" viewBox="0 0 24 24" fill="none" stroke="currentColor" strokeWidth="1.800">
                  <path d="m4.500 12.750 6 6 9-13.500" />
                </svg>
              </Chip>
            </StatusOption>
          </StatusBox>
        </StatusGroup>
      </Panel>
      <Actions>
        <CancelLink href="#">Cancel</CancelLink>
        <SubmitButton type="submit">Edit Invoice</SubmitButton>
      </Actions>
    </form>
  );
};

export default function App() {
  return (
    <>
      <GlobalStyle />
      <Backdrop>
        <Bezel>
          <Shadow>
            <Window>
              <SystemBar />
              <BrowserChrome />
              <Page>
                <Sidebar>
                  <LogoCard href="#">
                    <HiOutlineGlobeAlt />
                    Acme
                  </LogoCard>
                  {navLinks.map(({ label, icon: Icon }) => (
                    <NavLink key={label} href="#">
                      <Icon />
                      {label}
                    </NavLink>
                  ))}
                  <Filler>
                    <Caret />
                  </Filler>
                  <SignOutButton type="button">
                    <HiOutlinePower />
                    Sign Out
                  </SignOutButton>
                </Sidebar>
                <Main>
                  <Crumbs aria-label="Breadcrumb">
                    <a href="#">Invoices</a>
                    <span>/</span>
                    <CrumbCurrent href="#" aria-current="page">
                      Edit Invoice
                    </CrumbCurrent>
                  </Crumbs>
                  <InvoiceForm />
                </Main>
              </Page>
              <DevBadge type="button" aria-label="Next.js">
                <NextMark size={17} />
              </DevBadge>
            </Window>
          </Shadow>
        </Bezel>
      </Backdrop>
    </>
  );
}
